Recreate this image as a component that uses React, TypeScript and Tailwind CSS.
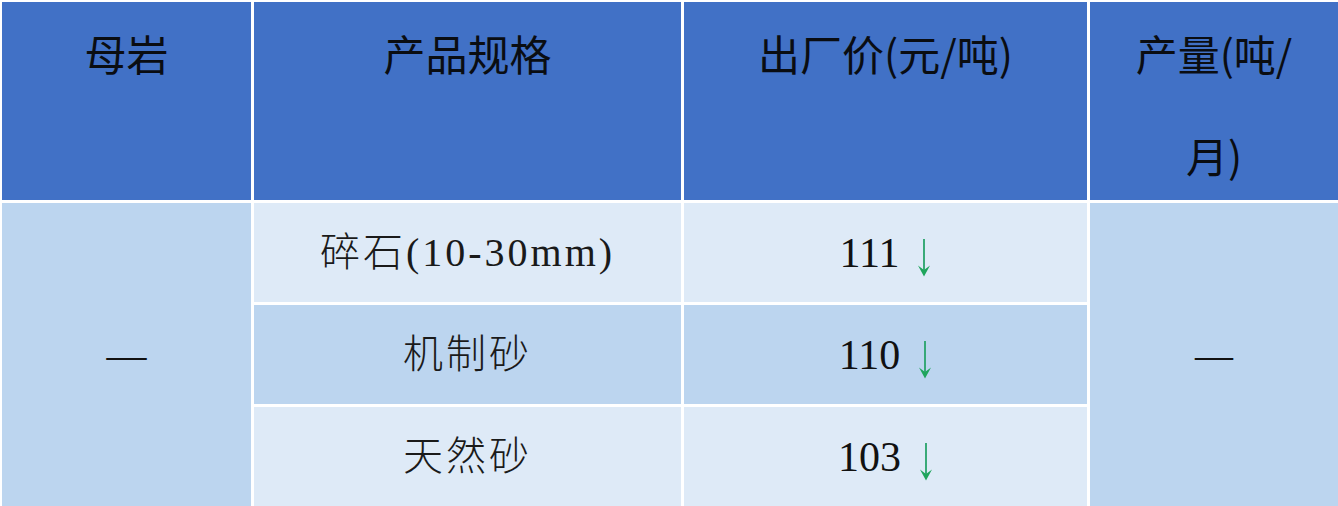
import React from "react";

function Arrow() {
  return (
    <svg width="14" height="38" viewBox="0 0 14 38" className="mt-[10px] shrink-0">
      <line x1="7" y1="0" x2="7" y2="34" stroke="#27a36a" strokeWidth="1.8" />
      <path d="M1 26.5 L7 37.5 L13 26.5 L7 31 Z" fill="#1fa55c" />
    </svg>
  );
}

function HeadCell({ children }: { children: React.ReactNode }) {
  return (
    <div className="bg-[#4171c6] text-[#0a0d12] text-[42px] leading-[102px] text-center font-normal font-['Noto_Sans_CJK_SC','Noto_Sans',sans-serif]">
      {children}
    </div>
  );
}

function SpecCell({ children, dark }: { children: React.ReactNode; dark?: boolean }) {
  return (
    <div
      className={
        dark
          ? "bg-[#bcd5ef] flex items-center justify-center text-[40px] text-[#1a1a1a] font-light tracking-[3px] font-['Liberation_Serif','Noto_Sans_CJK_SC',serif]"
          : "bg-[#deeaf7] flex items-center justify-center text-[40px] text-[#1a1a1a] font-light tracking-[3px] font-['Liberation_Serif','Noto_Sans_CJK_SC',serif]"
      }
    >
      {children}
    </div>
  );
}

function PriceCell({ value, dark }: { value: string; dark?: boolean }) {
  return (
    <div
      className={
        dark
          ? "bg-[#bcd5ef] flex items-center justify-center gap-[18px]"
          : "bg-[#deeaf7] flex items-center justify-center gap-[18px]"
      }
    >
      <span className="text-[42px] leading-none text-[#111] font-['Liberation_Serif',serif]">{value}</span>
      <Arrow />
    </div>
  );
}

export default function App() {
  return (
    <div className="w-[1338px] h-[506px] overflow-hidden bg-white">
      <div className="grid grid-cols-[249px_427px_403px_248px] grid-rows-[198px_99px_99px_100px] gap-[3px] pl-[2px] pt-[2px] bg-white">
        <HeadCell>母岩</HeadCell>
        <HeadCell>产品规格</HeadCell>
        <HeadCell>出厂价(元/吨)</HeadCell>
        <HeadCell>
          产量(吨/
          <br />
          月)
        </HeadCell>

        <div className="row-span-3 bg-[#bcd5ef] flex items-center justify-center text-[40px] text-[#111] font-['Liberation_Serif',serif]">
          —
        </div>

        <SpecCell>碎石(10-30mm)</SpecCell>
        <PriceCell value="111" />
        <div className="row-span-3 bg-[#bcd5ef] flex items-center justify-center text-[38px] text-[#111] font-['Liberation_Serif',serif]">
          —
        </div>

        <SpecCell dark>机制砂</SpecCell>
        <PriceCell value="110" dark />

        <SpecCell>天然砂</SpecCell>
        <PriceCell value="103" />
      </div>
    </div>
  );
}
